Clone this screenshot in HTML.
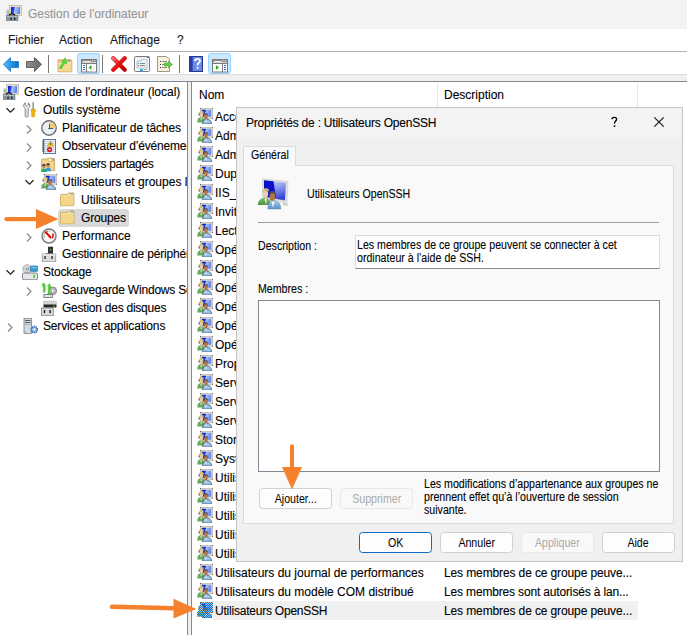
<!DOCTYPE html>
<html><head><meta charset="utf-8">
<style>
html,body{margin:0;padding:0;}
body{width:687px;height:635px;overflow:hidden;position:relative;background:#fff;font-family:"Liberation Sans",sans-serif;font-size:12px;color:#000;}
.a{position:absolute;}
.t{position:absolute;white-space:nowrap;line-height:14px;-webkit-text-stroke:0.1px currentColor;}
.ic{position:absolute;width:16px;height:16px;}
.dl{font-size:12px;line-height:13px;transform:scaleX(0.885);transform-origin:0 0;}
.bs{display:inline-block;transform:scaleX(0.885);transform-origin:50% 50%;}
.btn{position:absolute;box-sizing:border-box;height:21px;border:1px solid #d0d0d0;border-radius:3.5px;background:#fdfdfd;font-size:12px;text-align:center;line-height:19px;padding-top:1px;color:#000;}
</style></head><body>
<svg width="0" height="0" style="position:absolute">
<defs>
<linearGradient id="scr" x1="0" y1="0" x2="1" y2="0.2"><stop offset="0" stop-color="#0010d8"/><stop offset="0.4" stop-color="#1a3ae8"/><stop offset="0.46" stop-color="#a8c0f8"/><stop offset="1" stop-color="#6a88e8"/></linearGradient>
<symbol id="grp" viewBox="0 0 16 16">
<rect x="3.4" y="0.2" width="12.4" height="10.2" fill="#dcd8cc" stroke="#aaa69a" stroke-width="0.5"/>
<rect x="3" y="-0.2" width="1" height="1" fill="#404040"/><rect x="15.3" y="-0.2" width="1" height="1" fill="#404040"/><rect x="15.3" y="9.8" width="1" height="1" fill="#404040"/>
<rect x="4.8" y="1.8" width="9.4" height="7" fill="url(#scr)"/>
<path d="M2 5.8 Q2 2.8 4.5 2.8 Q7 2.8 6.8 5.8 Q4.5 4.3 2 5.8Z" fill="#d4bc6c"/>
<ellipse cx="4.4" cy="6.9" rx="1.8" ry="2.3" fill="#eccaa0"/>
<path d="M1.5 7 Q1.5 5 2.5 5 L2.6 8 Z" fill="#303030"/>
<path d="M0.2 14.5 Q0.2 9.3 4 9.3 Q7.8 9.3 7.8 14.5Z" fill="#68a858"/>
<rect x="3.6" y="9.6" width="1" height="2.5" fill="#e0ecd8"/>
<path d="M6.6 8 Q6.6 5 8.9 5 Q11.2 5 11.2 8 Q9 6.6 6.6 8Z" fill="#5a5a5a"/>
<ellipse cx="8.9" cy="8.7" rx="1.9" ry="2.5" fill="#b07850"/>
<path d="M5.6 16 Q5.6 11.2 9.5 11.2 Q14.6 11.2 14.6 16Z" fill="#98c0e8" stroke="#304050" stroke-width="0.6"/>
<rect x="8.5" y="11.5" width="1" height="2.5" fill="#f0f4f8"/>
</symbol>
<symbol id="fold" viewBox="0 0 16 16">
<path d="M0.5 3.2 Q0.5 2.4 1.4 2.4 H7.5 L8.3 0.9 H13.3 Q14 0.9 14 1.6 V13.7 H0.5Z" fill="#f6e2a0" stroke="#c8a050" stroke-width="0.8"/>
<path d="M0.9 4 H13.6 V13.3 H0.9Z" fill="#f2d68a"/>
<rect x="10.6" y="1.5" width="2.6" height="1" fill="#4a9ae0"/>
</symbol>
<linearGradient id="scr3" x1="0" y1="0" x2="1" y2="0.15"><stop offset="0" stop-color="#0818d0"/><stop offset="0.35" stop-color="#2a48e4"/><stop offset="0.5" stop-color="#b4caf4"/><stop offset="1" stop-color="#5a84e8"/></linearGradient>
<symbol id="comp" viewBox="0 0 16 16">
<rect x="3.3" y="0.3" width="12.4" height="10" fill="#e2decf" stroke="#b0ac9c" stroke-width="0.6"/>
<rect x="5" y="2" width="9" height="7" fill="url(#scr3)"/>
<rect x="0.5" y="4.5" width="2.6" height="5.5" fill="#c4c4c4"/><rect x="0.8" y="6.3" width="2" height="1.3" fill="#50e040"/>
<rect x="0.2" y="10.2" width="11.8" height="5.6" fill="#8696a4" stroke="#687684" stroke-width="0.5"/>
<rect x="1" y="11" width="10.2" height="1" fill="#aebac6"/>
<rect x="4.4" y="12.6" width="1.3" height="2.4" fill="#1c1c1c"/><rect x="8" y="12.6" width="1.3" height="2.4" fill="#1c1c1c"/>
<path d="M3 10.2 Q6 7.6 9 10.2" fill="none" stroke="#151515" stroke-width="1.3"/>
</symbol>

<linearGradient id="bl" x1="0" y1="0" x2="1" y2="0"><stop offset="0" stop-color="#48c0ff"/><stop offset="1" stop-color="#0a70c8"/></linearGradient>
<linearGradient id="gr" x1="0" y1="0" x2="1" y2="0"><stop offset="0" stop-color="#909090"/><stop offset="1" stop-color="#6a6a6a"/></linearGradient>
<symbol id="back" viewBox="0 0 16 16">
<path d="M0.5 7.3 L7.5 0.5 V4.5 H15.5 V10.5 H7.5 V14.5 Z" fill="url(#bl)" stroke="#2a7ac8" stroke-width="0.9" stroke-linejoin="round"/>
</symbol>
<symbol id="fwd" viewBox="0 0 16 16">
<path d="M15.5 7.3 L8.5 0.5 V4.5 H0.5 V10.5 H8.5 V14.5 Z" fill="url(#gr)" stroke="#555" stroke-width="0.9" stroke-linejoin="round"/>
</symbol>
<symbol id="upf" viewBox="0 0 16 16">
<path d="M1 3.6 Q1 2.8 1.8 2.8 H14 Q14.8 2.8 14.8 3.6 V14.8 H1Z" fill="#eccf84" stroke="#bf9850" stroke-width="0.8"/>
<path d="M1.4 5.8 H14.4 V14.4 H1.4Z" fill="#f6da92"/>
<path d="M1.4 6 H14.4" stroke="#fbeab8" stroke-width="0.8"/>
<ellipse cx="11.8" cy="3.6" rx="1.3" ry="0.7" fill="#3a88e8"/>
<path d="M2.4 11 Q3.6 7.8 5.8 6.4 L4.6 5.6 L8.2 0.8 L9.8 6.6 L8.2 6 Q6.2 7.8 4.4 11.8Z" fill="#58e040" stroke="#34a828" stroke-width="0.5"/>
</symbol>
<symbol id="winL" viewBox="0 0 16 16">
<rect x="0.5" y="0.5" width="15" height="12.5" fill="#fff" stroke="#7a7a7a" stroke-width="1"/>
<rect x="1" y="1" width="14" height="2" fill="#8c8c8c"/><rect x="2" y="2" width="8" height="1" fill="#e6e6e6"/><rect x="11" y="1" width="1" height="1" fill="#e6e6e6"/><rect x="13" y="1" width="1" height="1" fill="#e6e6e6"/>
<rect x="1" y="3" width="14" height="1" fill="#d8d8d8"/>
<rect x="1" y="4" width="14" height="1" fill="#7a7a7a"/>
<rect x="5" y="5" width="1" height="8" fill="#7a7a7a"/>
<rect x="2" y="6" width="2" height="1" fill="#2a6ac0"/><rect x="2" y="8" width="2" height="1" fill="#2a6ac0"/><rect x="2" y="10" width="2" height="1" fill="#2a6ac0"/>
<rect x="12" y="5" width="1" height="8" fill="#ececec"/>
<path d="M7.5 8.5 L10.5 6 V11Z" fill="#30b020"/>
</symbol>
<symbol id="winR" viewBox="0 0 16 16">
<rect x="0.5" y="0.5" width="15" height="12.5" fill="#fff" stroke="#7a7a7a" stroke-width="1"/>
<rect x="1" y="1" width="14" height="2" fill="#8c8c8c"/><rect x="2" y="2" width="8" height="1" fill="#e6e6e6"/><rect x="11" y="1" width="1" height="1" fill="#e6e6e6"/><rect x="13" y="1" width="1" height="1" fill="#e6e6e6"/>
<rect x="1" y="3" width="14" height="1" fill="#d8d8d8"/>
<rect x="1" y="4" width="14" height="1" fill="#7a7a7a"/>
<rect x="10" y="5" width="1" height="8" fill="#7a7a7a"/>
<rect x="12" y="6" width="2" height="1" fill="#2a6ac0"/><rect x="12" y="8" width="2" height="1" fill="#2a6ac0"/><rect x="12" y="10" width="2" height="1" fill="#2a6ac0"/>
<path d="M4 6 L7 8.5 L4 11Z" fill="#30b020"/>
</symbol>
<linearGradient id="rx" x1="0" y1="0" x2="1" y2="1"><stop offset="0" stop-color="#f07070"/><stop offset="0.5" stop-color="#e81010"/><stop offset="1" stop-color="#b00000"/></linearGradient>
<symbol id="redx" viewBox="0 0 16 16">
<path d="M2.3 2.3 L13.7 13.7 M13.7 2.3 L2.3 13.7" stroke="#c81010" stroke-width="4.2" stroke-linecap="round"/>
<path d="M2.3 2.3 L13.7 13.7 M13.7 2.3 L2.3 13.7" stroke="url(#rx)" stroke-width="3.2" stroke-linecap="round"/>
</symbol>
<symbol id="props" viewBox="0 0 16 16">
<rect x="0.5" y="0.5" width="15" height="15" rx="1" fill="#f8f8fa" stroke="#7c7c7c" stroke-width="1"/>
<rect x="1" y="1" width="14" height="1" fill="#e4e4ea"/><rect x="13" y="1" width="2" height="1" fill="#5a6a8a"/>
<path d="M3 5 H7 V3.5 H13 V12 H3Z" fill="#eef0f6" stroke="#a8aec0" stroke-width="0.7"/>
<rect x="4" y="7" width="1" height="1" fill="#20a0f0"/><rect x="6" y="7" width="5" height="1" fill="#8a8a8a"/>
<rect x="4" y="9" width="1" height="1" fill="#707070"/><rect x="6" y="9" width="5" height="1" fill="#8a8a8a"/>
<rect x="6" y="13" width="3" height="2" fill="#20b0f0"/><rect x="10" y="13" width="3" height="1" fill="#b0b0b0"/>
</symbol>
<symbol id="export" viewBox="0 0 16 16">
<path d="M0.5 0.5 H9.5 L12.5 3.5 V15.5 H0.5Z" fill="#fbf3d8" stroke="#8a8a8a" stroke-width="0.9"/>
<rect x="3" y="5" width="1" height="1" fill="#333"/><rect x="5" y="5" width="5" height="0.8" fill="#6a6aa0"/>
<rect x="3" y="8" width="1" height="1" fill="#333"/><rect x="5" y="8" width="5" height="0.8" fill="#6a6aa0"/>
<rect x="3" y="11" width="1" height="1" fill="#333"/><rect x="5" y="11" width="5" height="0.8" fill="#6a6aa0"/>
<path d="M7.5 7 H11.5 V5 L15.5 8.5 L11.5 12 V10 H7.5Z" fill="#60d040" stroke="#40a030" stroke-width="0.5"/>
</symbol>
<symbol id="help" viewBox="0 0 16 16">
<rect x="0.5" y="0.5" width="13" height="15" fill="#4a6ad8" stroke="#203a90" stroke-width="1"/>
<rect x="1" y="1" width="2.5" height="14" fill="#2a40a0"/>
<rect x="4" y="1" width="9" height="14" fill="#6a88e8"/>
<path d="M6 5.2 Q6 2.8 8.6 2.8 Q11 2.8 11 5 Q11 6.5 9.3 7.3 Q8.6 7.8 8.6 9.5" fill="none" stroke="#fff" stroke-width="1.7"/>
<rect x="7.7" y="11" width="1.8" height="1.8" fill="#fff"/>
</symbol>
<symbol id="tools" viewBox="0 0 16 16">
<path d="M3.4 0.8 Q1.4 1.8 1.6 4.2 Q1.9 5.8 3.2 6.4 V14.4 Q4.7 15.8 6.2 14.4 V6.4 Q7.6 5.8 7.9 4.2 Q8.1 1.8 6.2 0.8 L6.6 3 L4.8 4.2 L3 3Z" fill="#efefef" stroke="#6e6e6e" stroke-width="0.8"/>
<path d="M4.7 7 V13.5" stroke="#c0c0c0" stroke-width="0.7"/>
<rect x="10.6" y="0.2" width="1.1" height="7.6" fill="#6a6a6a"/>
<path d="M9 7.2 h4.3 v2.2 h-0.6 v5 q-1.55 1.3 -3.1 0 v-5 h-0.6z" fill="#f4b400" stroke="#c88a00" stroke-width="0.5"/>
</symbol>
<symbol id="clock" viewBox="0 0 16 16">
<circle cx="8" cy="8" r="7.2" fill="#e8f0f8" stroke="#6e6e6e" stroke-width="1.4"/>
<circle cx="8" cy="8" r="5.9" fill="none" stroke="#c4d0dc" stroke-width="0.6" stroke-dasharray="0.8 0.8"/>
<path d="M8.5 8.5 V1.8 A6.3 6.3 0 0 1 14.6 8.5 Z" fill="#f0cc78"/>
<path d="M8.5 3.8 V9.2" stroke="#4a5a70" stroke-width="1"/>
<path d="M7.2 8.5 H12.2" stroke="#4a5a70" stroke-width="1"/>
</symbol>
<symbol id="event" viewBox="0 0 16 16">
<rect x="2.5" y="1.5" width="12" height="14" fill="#eef2fa" stroke="#5a74b4" stroke-width="1"/>
<path d="M3.5 3.5h10M3.5 5.5h10M3.5 7.5h10M3.5 9.5h10M3.5 11.5h10M3.5 13.5h10" stroke="#b8c8e4" stroke-width="0.8"/>
<path d="M1 3h2.6M1 5h2.6M1 7h2.6M1 9h2.6M1 11h2.6M1 13h2.6" stroke="#505050" stroke-width="1"/>
<path d="M9.6 2.8 L12.8 8.2 H6.4Z" fill="#f2cc10" stroke="#b89400" stroke-width="0.5"/>
<rect x="9.2" y="4.8" width="0.9" height="2" fill="#333"/>
<circle cx="8.6" cy="11.6" r="2.6" fill="#d42020"/><rect x="7.6" y="11.1" width="2" height="1" fill="#fff"/>
</symbol>
<symbol id="share" viewBox="0 0 16 16">
<path d="M0.6 3.8 Q0.6 3 1.4 3 H6 L6.6 2.3 H13 Q13.6 2.3 13.6 3 V14.6 H0.6Z" fill="#f2d488" stroke="#c49c50" stroke-width="0.8"/>
<path d="M6.8 5.4 H13.3" stroke="#d8b468" stroke-width="0.6"/>
<rect x="8" y="3.3" width="3" height="1" fill="#fff"/><rect x="10.8" y="3.2" width="2" height="1.2" rx="0.5" fill="#3a88e8"/>
<path d="M0.6 6 H6 L6.8 5.4" fill="none" stroke="#fbe6b0" stroke-width="0.6"/>
<path d="M0.2 16 Q0.2 12.4 3 12.4 Q5.8 12.4 5.8 16Z" fill="#30a860"/>
<ellipse cx="2.9" cy="10.3" rx="1.6" ry="2" fill="#c08860"/>
<path d="M1.1 10 Q1 8 2.9 8 Q4.8 8 4.7 10 Q2.9 9 1.1 10Z" fill="#303030"/>
<path d="M4.6 15.2 Q4.6 11.6 7.3 11.6 Q10 11.6 10 15.2Z" fill="#3898d8"/>
<ellipse cx="7.1" cy="9.6" rx="1.6" ry="2" fill="#c08860"/>
<path d="M5.3 9.3 Q5.2 7.3 7.1 7.3 Q9 7.3 8.9 9.3 Q7.1 8.3 5.3 9.3Z" fill="#303030"/>
</symbol>
<symbol id="perf" viewBox="0 0 16 16">
<circle cx="8" cy="8" r="7" fill="#f8f8f4" stroke="#7c7c7c" stroke-width="1.5"/>
<path d="M3.3 9.5 A5 5 0 0 1 9.5 3.2" fill="none" stroke="#4a8a70" stroke-width="1.2" stroke-dasharray="0.9 0.9"/>
<path d="M4.3 3.6 L10 10" stroke="#e00000" stroke-width="1.9"/>
<path d="M11.8 5.5 Q12.8 8 11.2 10.4" fill="none" stroke="#e00000" stroke-width="1.5"/>
</symbol>
<symbol id="dev" viewBox="0 0 16 16">
<rect x="7" y="0.7" width="5" height="6.8" fill="#333"/><rect x="9" y="3" width="1.2" height="1.2" fill="#40e040"/>
<rect x="5" y="7.2" width="7" height="0.8" fill="#555"/>
<rect x="1.2" y="8" width="13.6" height="7.8" fill="#dcdcdc" stroke="#8a8a8a" stroke-width="0.7"/>
<rect x="1.6" y="8.4" width="12.8" height="1.2" fill="#f0f0f0"/>
<rect x="3.4" y="10" width="1.3" height="3" fill="#202020"/><rect x="10.4" y="10" width="1.3" height="3" fill="#202020"/>
</symbol>
<symbol id="stor" viewBox="0 0 16 16">
<circle cx="5.2" cy="5" r="4.4" fill="#d4d4d8" stroke="#a0a0a4" stroke-width="0.6"/><circle cx="5.4" cy="5.2" r="1.1" fill="#fff" stroke="#333" stroke-width="0.5"/>
<rect x="1.2" y="3.5" width="1" height="1.5" fill="#50d040"/>
<rect x="8.3" y="2" width="7.5" height="5.4" rx="1.2" fill="#3a9ad0" stroke="#1a70a8" stroke-width="0.6"/><rect x="9.5" y="3" width="5" height="1.2" fill="#88c8f0"/>
<rect x="0.5" y="9" width="15" height="6.8" rx="1.5" fill="#e6e6ec" stroke="#6a6a6a" stroke-width="0.8"/>
<rect x="11.4" y="10.6" width="1.6" height="3.4" fill="#40d040"/>
</symbol>
<symbol id="backup" viewBox="0 0 16 16">
<circle cx="11.8" cy="8.8" r="3.8" fill="#b8b8c0" stroke="#505058" stroke-width="0.6"/><circle cx="11.8" cy="8.8" r="1" fill="#fff"/>
<path d="M10.5 10 L12.5 11.5 L11 12Z" fill="#f08040"/>
<path d="M2.8 12.5 H11.5 V15.5 H2.8Z" fill="#e4e4e8" stroke="#555" stroke-width="0.7"/>
<path d="M1 2.5 Q2.5 1.5 3 0.8 Q3.5 3 5.2 4 L4 4.2 Q4.8 7 3.8 10.5 L2.2 10 Q2.8 7 1.8 4.2 Z" fill="#50dc30" stroke="#30a020" stroke-width="0.4"/>
<path d="M6.5 4 Q8 2.5 8.4 1.5 Q9 3.5 10.2 4.5 L9.2 4.6 Q9.6 8 8.4 12.5 L6.8 12 Q7.8 8 7.2 4.6Z" fill="#50dc30" stroke="#30a020" stroke-width="0.4"/>
</symbol>
<symbol id="disk" viewBox="0 0 16 16">
<rect x="2.5" y="1" width="13" height="3.5" fill="#d4d4d8" stroke="#b0b0b4" stroke-width="0.4"/>
<rect x="2.5" y="4.5" width="13" height="3" fill="#262626"/><rect x="12.2" y="5.5" width="1.4" height="1.2" fill="#40e040"/>
<rect x="0.6" y="8" width="11.6" height="7.8" fill="#dcdcdc" stroke="#6a6a6a" stroke-width="0.7"/>
<rect x="2.8" y="10" width="1.4" height="3.2" fill="#181818"/><rect x="8.4" y="10" width="1.4" height="3.2" fill="#181818"/>
</symbol>
<symbol id="svc" viewBox="0 0 16 16">
<rect x="2" y="0.5" width="7.6" height="15" fill="#d4dce4" stroke="#6a7480" stroke-width="0.7"/>
<rect x="3" y="2" width="5.6" height="1" fill="#505c6a"/><rect x="3" y="4" width="5.6" height="1" fill="#505c6a"/><rect x="3" y="6" width="5.6" height="0.8" fill="#9aa6b2"/>
<rect x="3" y="13.5" width="1.2" height="1" fill="#40c040"/>
<circle cx="12.3" cy="11.6" r="3.1" fill="#7aaae0" stroke="#3a6ab0" stroke-width="1.8" stroke-dasharray="1.1 0.85"/>
<circle cx="12.3" cy="11.6" r="2.2" fill="#8ab8e8"/><circle cx="12.3" cy="11.6" r="1.1" fill="#fff"/>
</symbol>

<linearGradient id="scr2" x1="0" y1="0" x2="0.3" y2="1"><stop offset="0" stop-color="#d4dcfc"/><stop offset="0.5" stop-color="#8a9af0"/><stop offset="1" stop-color="#3848d8"/></linearGradient>
<linearGradient id="gb" x1="0" y1="0" x2="0" y2="1"><stop offset="0" stop-color="#88c070"/><stop offset="1" stop-color="#4a9040"/></linearGradient>
<linearGradient id="bb" x1="0" y1="0" x2="0" y2="1"><stop offset="0" stop-color="#a8cef0"/><stop offset="1" stop-color="#5a90c8"/></linearGradient>
<symbol id="grp32" viewBox="0 0 40 40">
<path d="M8.5 4.7 L34 7.5 L32.8 29 L8.5 24.5Z" fill="#e4e4e0" stroke="#c8c8c0" stroke-width="0.6"/>
<path d="M10 6.2 L32 8.8 L31 26.5 L10 22.8Z" fill="url(#scr2)"/>
<path d="M10 6.2 L19.5 7.3 L22 23.8 L10 22.8Z" fill="#0a10c8"/>
<path d="M29 28.5 L34 29.5 L33.5 32 L28.5 31Z" fill="#d0d0d0"/>
<ellipse cx="11.6" cy="19.8" rx="2.6" ry="3.5" fill="#f0cca8"/>
<path d="M8.7 19.5 Q8.2 14.2 12 14.2 Q15.4 14.2 15.2 17.8 Q13.8 16.2 11.6 16.6 Q9.8 17.2 8.7 19.5Z" fill="#d8c070"/>
<path d="M3.8 31 Q3.8 24.5 11 23.5 Q17 24 17.5 31Z" fill="url(#gb)"/>
<path d="M10.5 24.5 L12 31 L13 24.5Z" fill="#e8f0e8"/>
<ellipse cx="18.4" cy="22.8" rx="2.9" ry="4.2" fill="#b07448"/>
<path d="M15.4 22 Q15 17 18.6 17 Q22 17 21.6 21.5 Q20.6 19.3 18.4 19.3 Q16.4 19.5 15.4 22Z" fill="#505050"/>
<path d="M13.8 35 Q13.8 27 19.5 26.5 Q26.8 27 27 35Z" fill="url(#bb)" stroke="#6a8aa8" stroke-width="0.5"/>
<path d="M17.5 27.5 L19 34 L20.5 27.5Z" fill="#f4f4f4"/>
</symbol>

<pattern id="chk" x="0" y="0" width="2" height="2" patternUnits="userSpaceOnUse"><rect x="0" y="0" width="1" height="1" fill="#0a78d8"/><rect x="1" y="1" width="1" height="1" fill="#0a78d8"/></pattern>
<symbol id="grpsel" viewBox="0 0 16 16">
<use href="#grp"/>
<path d="M3 0 H16 V11 H12 L14.6 12 V16 H5.6 V14.5 H0 V10 L1.5 8 V4 L3 3Z" fill="url(#chk)"/>
</symbol>
</defs></svg>

<div class="a" style="left:0;top:0;width:687px;height:29px;background:#f3f3f3"></div>
<svg class="ic" style="left:6px;top:5px"><use href="#comp"/></svg>
<div class="t" style="left:28px;top:7px;color:#969696">Gestion de l'ordinateur</div>
<div class="a" style="left:0;top:29px;width:687px;height:22px;background:#fff"></div>
<div class="t" style="left:8px;top:33px;color:#1a1a1a">Fichier</div>
<div class="t" style="left:59px;top:33px;color:#1a1a1a">Action</div>
<div class="t" style="left:110px;top:33px;color:#1a1a1a">Affichage</div>
<div class="t" style="left:177px;top:33px;color:#1a1a1a">?</div>
<div class="a" style="left:0;top:51px;width:687px;height:1px;background:#b0b0b0"></div>
<div class="a" style="left:0;top:52px;width:687px;height:22px;background:#fff"></div>
<div class="a" style="left:0;top:74px;width:687px;height:1px;background:#dadada"></div>
<div class="a" style="left:0;top:75px;width:687px;height:6px;background:#f0f0f0"></div>
<div class="a" style="left:48px;top:55px;width:1px;height:18px;background:#7a7a7a"></div>
<div class="a" style="left:102px;top:55px;width:1px;height:18px;background:#7a7a7a"></div>
<div class="a" style="left:179px;top:55px;width:1px;height:18px;background:#7a7a7a"></div>
<div class="a" style="left:77px;top:53px;width:23px;height:21px;box-sizing:border-box;background:#cce8ff;border:1px solid #99d1ff;border-radius:3px"></div>
<div class="a" style="left:208px;top:53px;width:23px;height:21px;box-sizing:border-box;background:#cce8ff;border:1px solid #99d1ff;border-radius:3px"></div>
<svg class="ic" style="left:3px;top:57px"><use href="#back"/></svg>
<svg class="ic" style="left:26px;top:57px"><use href="#fwd"/></svg>
<svg class="ic" style="left:57px;top:57px"><use href="#upf"/></svg>
<svg class="ic" style="left:81px;top:59px"><use href="#winL"/></svg>
<svg class="ic" style="left:111px;top:56px"><use href="#redx"/></svg>
<svg class="ic" style="left:134px;top:56px"><use href="#props"/></svg>
<svg class="ic" style="left:157px;top:56px"><use href="#export"/></svg>
<svg class="ic" style="left:189px;top:56px"><use href="#help"/></svg>
<svg class="ic" style="left:212px;top:59px"><use href="#winR"/></svg>
<div class="a" style="left:0;top:81px;width:687px;height:1px;background:#828790"></div>
<div class="a" style="left:187px;top:81px;width:1px;height:554px;background:#828790"></div>
<div class="a" style="left:188px;top:82px;width:3px;height:553px;background:#f0f0f0"></div>
<div class="a" style="left:191px;top:81px;width:1px;height:554px;background:#828790"></div>
<div class="a" style="left:0;top:82px;width:187px;height:553px;overflow:hidden">
<svg class="ic" style="left:3px;top:2px"><use href="#comp"/></svg>
<div class="t" style="left:24px;top:3px;letter-spacing:0px">Gestion de l'ordinateur (local)</div>
<svg class="a" style="left:5px;top:20px" width="16" height="16"><path d="M1.5 6.2 L5.5 10.2 L9.5 6.2" fill="none" stroke="#222" stroke-width="1.3"/></svg>
<svg class="ic" style="left:22px;top:20px"><use href="#tools"/></svg>
<div class="t" style="left:43px;top:21px;letter-spacing:-0.1px">Outils système</div>
<svg class="a" style="left:24px;top:38px" width="16" height="16"><path d="M3 5.5 L7 9.5 L3 13.5" fill="none" stroke="#8a8a8a" stroke-width="1.2"/></svg>
<svg class="ic" style="left:41px;top:38px"><use href="#clock"/></svg>
<div class="t" style="left:62px;top:39px;letter-spacing:-0.11px">Planificateur de tâches</div>
<svg class="a" style="left:24px;top:56px" width="16" height="16"><path d="M3 5.5 L7 9.5 L3 13.5" fill="none" stroke="#8a8a8a" stroke-width="1.2"/></svg>
<svg class="ic" style="left:41px;top:56px"><use href="#event"/></svg>
<div class="t" style="left:62px;top:57px;letter-spacing:-0.18px">Observateur d’événements</div>
<svg class="a" style="left:24px;top:74px" width="16" height="16"><path d="M3 5.5 L7 9.5 L3 13.5" fill="none" stroke="#8a8a8a" stroke-width="1.2"/></svg>
<svg class="ic" style="left:41px;top:74px"><use href="#share"/></svg>
<div class="t" style="left:62px;top:75px;letter-spacing:-0.31px">Dossiers partagés</div>
<svg class="a" style="left:24px;top:92px" width="16" height="16"><path d="M1.5 6.2 L5.5 10.2 L9.5 6.2" fill="none" stroke="#222" stroke-width="1.3"/></svg>
<svg class="ic" style="left:41px;top:92px"><use href="#grp"/></svg>
<div class="t" style="left:62px;top:93px;letter-spacing:0px">Utilisateurs et groupes locaux</div>
<svg class="ic" style="left:60px;top:110px"><use href="#fold"/></svg>
<div class="t" style="left:81px;top:111px;letter-spacing:0px">Utilisateurs</div>
<div class="a" style="left:58px;top:127px;width:71px;height:18px;background:#d9d9d9;border-radius:3px"></div>
<svg class="ic" style="left:60px;top:128px"><use href="#fold"/></svg>
<div class="t" style="left:81px;top:129px;letter-spacing:-0.17px">Groupes</div>
<svg class="a" style="left:24px;top:146px" width="16" height="16"><path d="M3 5.5 L7 9.5 L3 13.5" fill="none" stroke="#8a8a8a" stroke-width="1.2"/></svg>
<svg class="ic" style="left:41px;top:146px"><use href="#perf"/></svg>
<div class="t" style="left:62px;top:147px;letter-spacing:0px">Performance</div>
<svg class="ic" style="left:41px;top:164px"><use href="#dev"/></svg>
<div class="t" style="left:62px;top:165px;letter-spacing:-0.18px">Gestionnaire de périphériques</div>
<svg class="a" style="left:5px;top:182px" width="16" height="16"><path d="M1.5 6.2 L5.5 10.2 L9.5 6.2" fill="none" stroke="#222" stroke-width="1.3"/></svg>
<svg class="ic" style="left:22px;top:182px"><use href="#stor"/></svg>
<div class="t" style="left:43px;top:183px;letter-spacing:-0.2px">Stockage</div>
<svg class="a" style="left:24px;top:200px" width="16" height="16"><path d="M3 5.5 L7 9.5 L3 13.5" fill="none" stroke="#8a8a8a" stroke-width="1.2"/></svg>
<svg class="ic" style="left:41px;top:200px"><use href="#backup"/></svg>
<div class="t" style="left:62px;top:201px;letter-spacing:-0.2px">Sauvegarde Windows Server</div>
<svg class="ic" style="left:41px;top:218px"><use href="#disk"/></svg>
<div class="t" style="left:62px;top:219px;letter-spacing:-0.24px">Gestion des disques</div>
<svg class="a" style="left:5px;top:236px" width="16" height="16"><path d="M3 5.5 L7 9.5 L3 13.5" fill="none" stroke="#8a8a8a" stroke-width="1.2"/></svg>
<svg class="ic" style="left:22px;top:236px"><use href="#svc"/></svg>
<div class="t" style="left:43px;top:237px;letter-spacing:-0.16px">Services et applications</div>
</div>
<div class="a" style="left:192px;top:82px;width:495px;height:553px;overflow:hidden">
<div class="t" style="left:7px;top:6px">Nom</div>
<div class="t" style="left:252px;top:6px">Description</div>
<div class="a" style="left:245px;top:1px;width:1px;height:24px;background:#e5e5e5"></div>
<div class="a" style="left:445px;top:1px;width:1px;height:24px;background:#e5e5e5"></div>
<svg class="ic" style="left:5px;top:26px" viewBox="0 0 16 16"><use href="#grp"/></svg>
<div class="t" style="left:23px;top:28px;letter-spacing:0px">Accès DCOM Administrateurs</div>
<svg class="ic" style="left:5px;top:45px" viewBox="0 0 16 16"><use href="#grp"/></svg>
<div class="t" style="left:23px;top:47px;letter-spacing:0px">Administrateurs</div>
<svg class="ic" style="left:5px;top:64px" viewBox="0 0 16 16"><use href="#grp"/></svg>
<div class="t" style="left:23px;top:66px;letter-spacing:0px">Administrateurs Hyper-V</div>
<svg class="ic" style="left:5px;top:83px" viewBox="0 0 16 16"><use href="#grp"/></svg>
<div class="t" style="left:23px;top:85px;letter-spacing:0px">Duplicateurs</div>
<svg class="ic" style="left:5px;top:102px" viewBox="0 0 16 16"><use href="#grp"/></svg>
<div class="t" style="left:23px;top:104px;letter-spacing:0px">IIS_IUSRS</div>
<svg class="ic" style="left:5px;top:121px" viewBox="0 0 16 16"><use href="#grp"/></svg>
<div class="t" style="left:23px;top:123px;letter-spacing:0px">Invités</div>
<svg class="ic" style="left:5px;top:140px" viewBox="0 0 16 16"><use href="#grp"/></svg>
<div class="t" style="left:23px;top:142px;letter-spacing:0px">Lecteurs des journaux</div>
<svg class="ic" style="left:5px;top:159px" viewBox="0 0 16 16"><use href="#grp"/></svg>
<div class="t" style="left:23px;top:161px;letter-spacing:0px">Opérateurs de chiffrement</div>
<svg class="ic" style="left:5px;top:178px" viewBox="0 0 16 16"><use href="#grp"/></svg>
<div class="t" style="left:23px;top:180px;letter-spacing:0px">Opérateurs de configuration</div>
<svg class="ic" style="left:5px;top:197px" viewBox="0 0 16 16"><use href="#grp"/></svg>
<div class="t" style="left:23px;top:199px;letter-spacing:0px">Opérateurs de sauvegarde</div>
<svg class="ic" style="left:5px;top:216px" viewBox="0 0 16 16"><use href="#grp"/></svg>
<div class="t" style="left:23px;top:218px;letter-spacing:0px">Opérateurs d’assistance</div>
<svg class="ic" style="left:5px;top:235px" viewBox="0 0 16 16"><use href="#grp"/></svg>
<div class="t" style="left:23px;top:237px;letter-spacing:0px">Opérateurs de contrôle</div>
<svg class="ic" style="left:5px;top:254px" viewBox="0 0 16 16"><use href="#grp"/></svg>
<div class="t" style="left:23px;top:256px;letter-spacing:0px">Opérateurs Hyper-V</div>
<svg class="ic" style="left:5px;top:273px" viewBox="0 0 16 16"><use href="#grp"/></svg>
<div class="t" style="left:23px;top:275px;letter-spacing:0px">Propriétaires</div>
<svg class="ic" style="left:5px;top:292px" viewBox="0 0 16 16"><use href="#grp"/></svg>
<div class="t" style="left:23px;top:294px;letter-spacing:0px">Serveurs</div>
<svg class="ic" style="left:5px;top:311px" viewBox="0 0 16 16"><use href="#grp"/></svg>
<div class="t" style="left:23px;top:313px;letter-spacing:0px">Serveurs</div>
<svg class="ic" style="left:5px;top:330px" viewBox="0 0 16 16"><use href="#grp"/></svg>
<div class="t" style="left:23px;top:332px;letter-spacing:0px">Serveurs</div>
<svg class="ic" style="left:5px;top:349px" viewBox="0 0 16 16"><use href="#grp"/></svg>
<div class="t" style="left:23px;top:351px;letter-spacing:0px">Storage Replica</div>
<svg class="ic" style="left:5px;top:368px" viewBox="0 0 16 16"><use href="#grp"/></svg>
<div class="t" style="left:23px;top:370px;letter-spacing:0px">System Managed</div>
<svg class="ic" style="left:5px;top:387px" viewBox="0 0 16 16"><use href="#grp"/></svg>
<div class="t" style="left:23px;top:389px;letter-spacing:0px">Utilisateurs</div>
<svg class="ic" style="left:5px;top:406px" viewBox="0 0 16 16"><use href="#grp"/></svg>
<div class="t" style="left:23px;top:408px;letter-spacing:0px">Utilisateurs</div>
<svg class="ic" style="left:5px;top:425px" viewBox="0 0 16 16"><use href="#grp"/></svg>
<div class="t" style="left:23px;top:427px;letter-spacing:0px">Utilisateurs</div>
<svg class="ic" style="left:5px;top:444px" viewBox="0 0 16 16"><use href="#grp"/></svg>
<div class="t" style="left:23px;top:446px;letter-spacing:0px">Utilisateurs</div>
<svg class="ic" style="left:5px;top:463px" viewBox="0 0 16 16"><use href="#grp"/></svg>
<div class="t" style="left:23px;top:465px;letter-spacing:0px">Utilisateurs</div>
<svg class="ic" style="left:5px;top:482px" viewBox="0 0 16 16"><use href="#grp"/></svg>
<div class="t" style="left:23px;top:484px;letter-spacing:0px">Utilisateurs du journal de performances</div>
<div class="t" style="left:252px;top:484px;letter-spacing:-0.12px">Les membres de ce groupe peuve...</div>
<svg class="ic" style="left:5px;top:501px" viewBox="0 0 16 16"><use href="#grp"/></svg>
<div class="t" style="left:23px;top:503px;letter-spacing:0px">Utilisateurs du modèle COM distribué</div>
<div class="t" style="left:252px;top:503px;letter-spacing:-0.16px">Les membres sont autorisés à lan...</div>
<div class="a" style="left:21px;top:519px;width:425px;height:19px;background:#f0f0f0"></div>
<svg class="ic" style="left:5px;top:520px" viewBox="0 0 16 16"><use href="#grpsel"/></svg>
<div class="t" style="left:23px;top:522px;letter-spacing:-0.22px">Utilisateurs OpenSSH</div>
<div class="t" style="left:252px;top:522px;letter-spacing:-0.12px">Les membres de ce groupe peuve...</div>
</div>
<div class="a" style="left:236px;top:107px;width:447px;height:455px;box-sizing:border-box;background:#f0f0f0;border:1px solid #c4c4c4"></div>
<div class="a" style="left:237px;top:108px;width:445px;height:30px;background:#f3f3f3"></div>
<div class="t" style="left:246px;top:116px;letter-spacing:-0.22px">Propriétés de : Utilisateurs OpenSSH</div>
<svg class="a" style="left:610px;top:116px" width="8" height="12"><path d="M2 3.3 Q2 1.3 4.3 1.3 Q6.6 1.3 6.6 3.3 Q6.6 4.6 5.3 5.4 Q4.5 6 4.5 7.8" stroke="#000" stroke-width="1.35" fill="none"/><rect x="3.7" y="9.3" width="1.6" height="1.6" fill="#000"/></svg>
<svg class="a" style="left:653px;top:116px" width="12" height="12"><path d="M1.3 1.3 L10.7 10.7 M10.7 1.3 L1.3 10.7" stroke="#111" stroke-width="1.1"/></svg>
<div class="a" style="left:243px;top:146px;width:53px;height:20px;box-sizing:border-box;background:#f9f9f9;border:1px solid #dcdcdc;border-bottom:none"></div>
<div class="a" style="left:243px;top:165px;width:431px;height:359px;box-sizing:border-box;background:#f9f9f9;border:1px solid #dcdcdc"></div>
<div class="a" style="left:244px;top:165px;width:51px;height:2px;background:#f9f9f9"></div>
<div class="t dl" style="left:250.5px;top:148.8px">Général</div>
<svg class="a" style="left:254px;top:174px" width="40" height="40"><use href="#grp32"/></svg>
<div class="t dl" style="left:306.5px;top:188.2px">Utilisateurs OpenSSH</div>
<div class="a" style="left:258px;top:222px;width:401px;height:1px;background:#a0a0a0"></div>
<div class="t dl" style="left:257.5px;top:240px">Description :</div>
<div class="a" style="left:355px;top:235px;width:305px;height:34px;box-sizing:border-box;background:#fff;border:1px solid #dcdcdc;border-bottom-color:#8a8a8a"></div>
<div class="t dl" style="left:356.5px;top:239.2px;line-height:12.8px">Les membres de ce groupe peuvent se connecter à cet<br>ordinateur à l’aide de SSH.</div>
<div class="t dl" style="left:257.5px;top:283px">Membres :</div>
<div class="a" style="left:258px;top:300px;width:402px;height:172px;box-sizing:border-box;background:#fff;border:1px solid #828790"></div>
<div class="btn" style="left:259px;top:488px;width:73px"><span class="bs">Ajouter...</span></div>
<div class="btn" style="left:340px;top:488px;width:73px;color:#aaaaaa;border-color:#e8e8e8;background:#f9f9f9"><span class="bs">Supprimer</span></div>
<div class="t dl" style="left:423.5px;top:478.2px;line-height:12.9px">Les modifications d’appartenance aux groupes ne<br>prennent effet qu’à l’ouverture de session<br>suivante.</div>
<div class="btn" style="left:359px;top:532px;width:73px;border:1px solid #0a6cc8"><span class="bs">OK</span></div>
<div class="btn" style="left:440px;top:532px;width:73px"><span class="bs">Annuler</span></div>
<div class="btn" style="left:521px;top:532px;width:73px;color:#aaaaaa;border-color:#e8e8e8;background:#f9f9f9"><span class="bs">Appliquer</span></div>
<div class="btn" style="left:602px;top:532px;width:73px"><span class="bs">Aide</span></div>
<svg class="a" style="left:0;top:0" width="687" height="635"><line x1="6.5" y1="219.2" x2="38" y2="219.2" stroke="#f5812d" stroke-width="4.2" stroke-linecap="round"/><path d="M36 209 L58.5 219 L36 229 Z" fill="#f5812d"/><line x1="292" y1="446.3" x2="292" y2="469" stroke="#f5812d" stroke-width="4" stroke-linecap="round"/><path d="M282 467 L302 467 L292 489.5 Z" fill="#f5812d"/><line x1="112" y1="606.8" x2="175" y2="608.3" stroke="#f5812d" stroke-width="4.4" stroke-linecap="round"/><path d="M173.5 598.8 L196.3 609 L173.5 618.5 Z" fill="#f5812d"/></svg>
</body></html>
